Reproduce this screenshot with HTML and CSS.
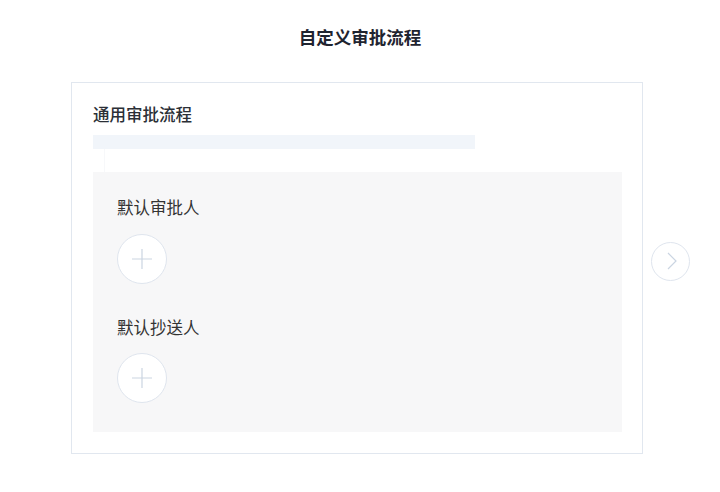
FILE: index.html
```html
<!DOCTYPE html>
<html lang="zh">
<head>
<meta charset="utf-8">
<link rel="stylesheet" href="styles.css">
</head>
<body>
<div class="page">
  <h1 class="title">自定义审批流程</h1>
  <div class="row">
    <div class="card">
      <div class="card-title">通用审批流程</div>
      <div class="bar"></div>
      <div class="spacer"></div>
      <div class="panel">
        <div class="group">
          <div class="label">默认审批人</div>
          <div class="add">
            <svg width="20" height="20" viewBox="0 0 20 20"><path d="M10 0V20M0 10H20" stroke="#cbd5e2" stroke-width="1.2" fill="none"/></svg>
          </div>
        </div>
        <div class="group second">
          <div class="label">默认抄送人</div>
          <div class="add">
            <svg width="20" height="20" viewBox="0 0 20 20"><path d="M10 0V20M0 10H20" stroke="#cbd5e2" stroke-width="1.2" fill="none"/></svg>
          </div>
        </div>
      </div>
    </div>
    <div class="next">
      <svg width="12" height="18" viewBox="0 0 12 18"><path d="M2 1L10 9L2 17" stroke="#cbd5e2" stroke-width="1.2" fill="none"/></svg>
    </div>
  </div>
</div>
</body>
</html>
```
FILE: styles.css
```css
* { box-sizing: border-box; }
html, body { margin: 0; padding: 0; background: #fff; }
body {
  font-family: "Noto Sans CJK SC", "Noto Sans", sans-serif;
  color: #333;
}
.page {
  width: 720px;
  height: 492px;
  padding-top: 24px;
  overflow: hidden;
}
.title {
  margin: 0;
  font-size: 17.5px;
  line-height: 26px;
  font-weight: 600;
  color: #1f2430;
  text-align: center;
}
.row {
  display: flex;
  align-items: center;
  margin-top: 32px;
  padding-left: 71px;
}
.card {
  width: 572px;
  height: 372px;
  border: 1px solid #e1e7ef;
  padding: 20px 20px 0 21px;
}
.card-title {
  font-size: 16.5px;
  line-height: 22px;
  font-weight: 500;
  color: #2b2f36;
}
.bar {
  margin-top: 10px;
  width: 382px;
  height: 14px;
  background: #f1f5fa;
}
.spacer {
  height: 23px;
  width: 12px;
  border-right: 1px solid #f7f8fa;
}
.panel {
  height: 260px;
  background: #f7f7f8;
  padding: 24px 24px 0;
}
.label {
  font-size: 16.5px;
  line-height: 22px;
  color: #333;
}
.add {
  margin-top: 16px;
  width: 50px;
  height: 50px;
  border-radius: 50%;
  background: #fff;
  border: 1px solid #dfe5ee;
  display: flex;
  align-items: center;
  justify-content: center;
}
.group.second { margin-top: 32px; }
.group.second .add { margin-top: 15px; }
.next {
  margin-left: 8px;
  width: 39px;
  height: 39px;
  border-radius: 50%;
  border: 1px solid #dfe5ee;
  display: flex;
  align-items: center;
  justify-content: center;
  margin-bottom: 14px;
  padding-left: 2px;
}
```
